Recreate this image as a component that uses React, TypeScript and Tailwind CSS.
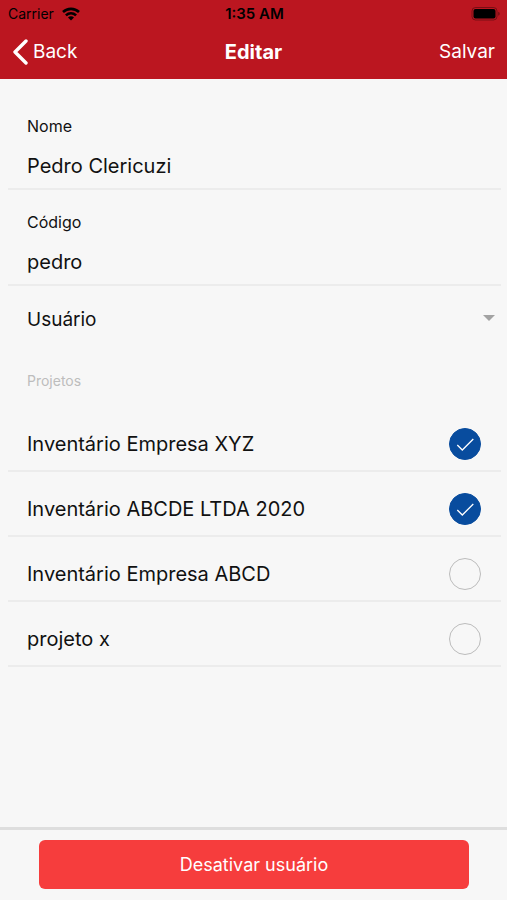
import { useState } from "react";

const PROJECTS = [
  { id: "xyz", name: "Inventário Empresa XYZ", member: true },
  { id: "ltda", name: "Inventário ABCDE LTDA 2020", member: true },
  { id: "abcd", name: "Inventário Empresa ABCD", member: false },
  { id: "x", name: "projeto x", member: false },
];

function StatusBar() {
  return (
    <div className="grid h-7 grid-cols-3 items-center pl-2 pr-1.5 text-sm text-black">
      <div className="flex items-center gap-2">
        <span>Carrier</span>
        <svg viewBox="0 0 18 14" className="h-[14px] w-[18px]" fill="none" stroke="currentColor" strokeWidth="2.6">
          <path d="M1 5C5.4 .8 12.6 .8 17 5" />
          <path d="M3.9 8.4C6.9 5.6 11.1 5.6 14.1 8.4" />
          <path d="M9 13.4 6 10.4C7.6 8.8 10.4 8.8 12 10.4Z" fill="currentColor" stroke="none" />
        </svg>
      </div>
      <span className="text-center text-[15px] font-semibold">1:35 AM</span>
      <svg viewBox="0 0 30 14" className="h-[14px] w-[30px] justify-self-end">
        <rect x="1" y=".5" width="25" height="12.5" rx="3.5" fill="none" stroke="#000" strokeOpacity=".35" />
        <rect x="2.5" y="2" width="22" height="9.5" rx="2" fill="#000" />
        <path d="M27.3 4.8v4c1.8-.7 1.8-3.3 0-4Z" fill="#000" fillOpacity=".45" />
      </svg>
    </div>
  );
}

function Field({
  id,
  label,
  value,
  onChange,
}: {
  id: string;
  label: string;
  value: string;
  onChange: (v: string) => void;
}) {
  return (
    <div className="ml-2 mr-1.5 border-b-2 border-[#ececec] pb-[7px] pl-[19px] pr-4 pt-[22px]">
      <label htmlFor={id} className="block text-base leading-5">
        {label}
      </label>
      <input
        id={id}
        value={value}
        onChange={(e) => onChange(e.target.value)}
        className="mt-[15px] block h-[30px] w-full bg-transparent text-xl outline-none"
      />
    </div>
  );
}

function ProjectRow({ name, checked, onToggle }: { name: string; checked: boolean; onToggle: () => void }) {
  return (
    <li className="ml-2 mr-1.5 border-b-2 border-[#ececec]">
      <label className="flex items-center justify-between pb-2.5 pl-[19px] pr-5 pt-[21px]">
        <span className="text-xl leading-8">{name}</span>
        <span className="relative size-8 shrink-0">
          <input
            type="checkbox"
            checked={checked}
            onChange={onToggle}
            className="block size-8 appearance-none rounded-full border border-[#bcbcbc] checked:border-[#084c9e] checked:bg-[#084c9e]"
          />
          {checked && (
            <svg
              viewBox="0 0 32 32"
              className="pointer-events-none absolute inset-0 size-8"
              fill="none"
              stroke="#fff"
              strokeWidth="1.3"
            >
              <path d="m8.3 17 5 5L24.3 11" />
            </svg>
          )}
        </span>
      </label>
    </li>
  );
}

export default function App() {
  const [name, setName] = useState("Pedro Clericuzi");
  const [code, setCode] = useState("pedro");
  const [role, setRole] = useState("user");
  const [projects, setProjects] = useState(PROJECTS);

  const toggle = (id: string) =>
    setProjects((prev) => prev.map((p) => (p.id === id ? { ...p, member: !p.member } : p)));

  return (
    <div className="flex min-h-screen flex-col bg-[#f7f7f7] font-['Inter','Liberation_Sans',sans-serif] text-[#111]">
      <header className="bg-[#bb1620] text-white">
        <StatusBar />
        <nav className="grid grid-cols-3 items-center pb-[3px] pl-3 pr-3 text-xl leading-[48px]">
          <button type="button" className="flex items-center gap-[5px] text-[19px]">
            <svg viewBox="0 0 16 26" className="h-[26px] w-4" fill="none" stroke="currentColor" strokeWidth="3.4">
              <path d="M14 2 3 13l11 11" strokeLinecap="round" strokeLinejoin="round" />
            </svg>
            Back
          </button>
          <h1 className="text-center font-bold">Editar</h1>
          <button type="button" className="justify-self-end text-[19px]">
            Salvar
          </button>
        </nav>
      </header>

      <main className="flex-1 pt-[15px]">
        <Field id="name" label="Nome" value={name} onChange={setName} />
        <Field id="code" label="Código" value={code} onChange={setCode} />

        <div className="relative">
          <select
            aria-label="Perfil"
            value={role}
            onChange={(e) => setRole(e.target.value)}
            className="block h-[68px] w-full appearance-none bg-transparent pl-[27px] pr-8 text-[19px] outline-none"
          >
            <option value="user">Usuário</option>
          </select>
          <svg viewBox="0 0 12 6" className="pointer-events-none absolute right-3 top-[29px] h-1.5 w-3" fill="#a3a3a3">
            <path d="M0 0h12L6 6Z" />
          </svg>
        </div>

        <h2 className="mb-4 mt-[17px] pl-[27px] text-sm leading-5 text-[#bdbdbd]">Projetos</h2>
        <ul>
          {projects.map((p) => (
            <ProjectRow key={p.id} name={p.name} checked={p.member} onToggle={() => toggle(p.id)} />
          ))}
        </ul>
      </main>

      <footer className="border-t-3 border-[#dedede] pb-[11px] pl-[39px] pr-[38px] pt-2.5">
        <button type="button" className="block w-full rounded-md bg-[#f63d3d] text-lg leading-[49px] text-white">
          Desativar usuário
        </button>
      </footer>
    </div>
  );
}
